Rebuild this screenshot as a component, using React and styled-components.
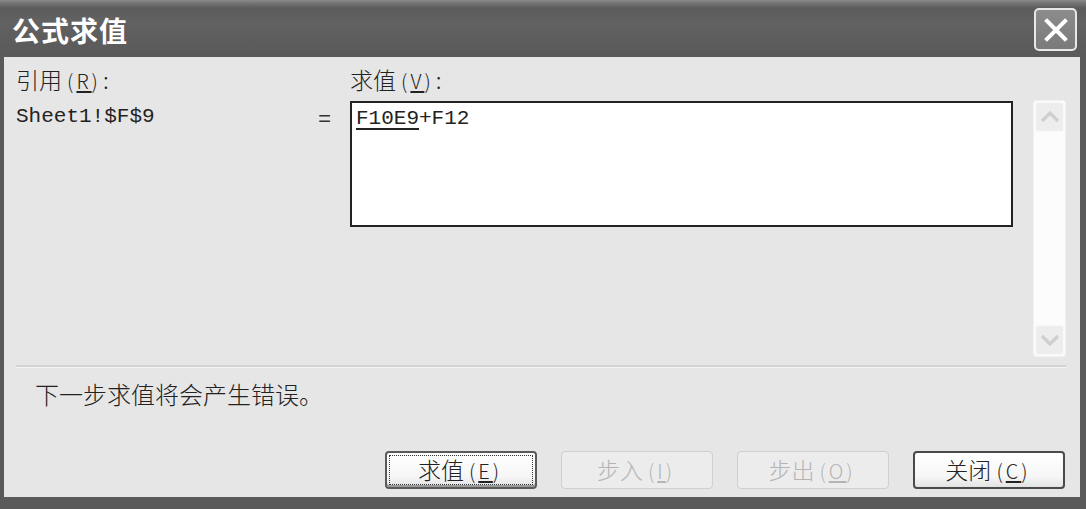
import React from 'react';
import styled, { createGlobalStyle } from 'styled-components';

const GlobalStyle = createGlobalStyle`
  html, body {
    margin: 0;
    padding: 0;
    background: #5a5a5a;
  }
  body {
    font-family: "Noto Sans CJK SC", "Noto Sans", sans-serif;
  }
`;

const cjk = '"Noto Sans CJK SC", "Noto Sans", sans-serif';
const mono = '"Liberation Mono", "DejaVu Sans Mono", monospace';

const Mnemonic = ({ letter, disabled }) => (
  <Key disabled={disabled}>
    (<u>{letter}</u>)
  </Key>
);

const ScrollArrow = ({ up }) => (
  <svg width="22" height="14" viewBox="0 0 22 14">
    <path
      d={up ? 'M3 11 L11 3 L19 11' : 'M3 3 L11 11 L19 3'}
      fill="none"
      stroke="#cfcfcf"
      strokeWidth="3.2"
    />
  </svg>
);

export default function App() {
  return (
    <Window>
      <GlobalStyle />
      <TitleBar>
        <Title>公式求值</Title>
        <CloseButton aria-label="close">
          <svg width="26" height="26" viewBox="0 0 26 26">
            <path d="M4 4 L22 22 M22 4 L4 22" stroke="#fff" strokeWidth="4" strokeLinecap="square" />
          </svg>
        </CloseButton>
      </TitleBar>

      <Body>
        <FieldGrid>
          <Label>
            引用 <Mnemonic letter="R" />:
          </Label>
          <Spacer />
          <Label>
            求值 <Mnemonic letter="V" />:
          </Label>
          <Spacer />
          <Spacer />

          <RefText>Sheet1!$F$9</RefText>
          <Equals>=</Equals>
          <ValueBox>
            <Current>F10E9</Current>+F12
          </ValueBox>
          <Spacer />
          <ScrollBar>
            <ScrollButton>
              <ScrollArrow up />
            </ScrollButton>
            <ScrollButton>
              <ScrollArrow />
            </ScrollButton>
          </ScrollBar>
        </FieldGrid>

        <Separator />
        <Message>下一步求值将会产生错误。</Message>

        <ButtonRow>
          <DialogButton primary>
            <Focus>
              <span>
                求值 <Mnemonic letter="E" />
              </span>
            </Focus>
          </DialogButton>
          <DialogButton disabled>
            <span>
              步入 <Mnemonic letter="I" disabled />
            </span>
          </DialogButton>
          <DialogButton disabled>
            <span>
              步出 <Mnemonic letter="O" disabled />
            </span>
          </DialogButton>
          <DialogButton>
            <span>
              关闭 <Mnemonic letter="C" />
            </span>
          </DialogButton>
        </ButtonRow>
      </Body>
    </Window>
  );
}

// Styled Components
const Window = styled.div`
  width: 1086px;
  height: 509px;
  display: flex;
  flex-direction: column;
  background: #5a5a5a;
  padding: 0 6px 12px 4px;
  box-sizing: border-box;
`;

const TitleBar = styled.div`
  height: 57px;
  margin: 0 -6px 0 -4px;
  padding: 0 9px 0 12px;
  display: flex;
  align-items: center;
  justify-content: space-between;
  box-sizing: border-box;
  background: linear-gradient(
    to bottom,
    #8a8a8a 0px,
    #767676 3px,
    #5c5c5c 8px,
    #626262 22px,
    #5e5e5e 34px,
    #5a5a5a 57px
  );
`;

const Title = styled.h1`
  margin: 0;
  padding-top: 2px;
  font-family: ${cjk};
  font-size: 28px;
  font-weight: 700;
  color: #ffffff;
  letter-spacing: 1px;
`;

const CloseButton = styled.button`
  width: 43px;
  height: 43px;
  margin-top: 2px;
  padding: 0;
  border: 2px solid #e8e8e8;
  border-radius: 5px;
  background: linear-gradient(to bottom, #8c8c8c, #7a7a7a);
  display: flex;
  align-items: center;
  justify-content: center;
`;

const Body = styled.div`
  flex: 1;
  background: #e6e6e6;
  padding: 8px 14px 8px 12px;
  display: flex;
  flex-direction: column;
  color: #222;
`;

const FieldGrid = styled.div`
  display: grid;
  grid-template-columns: 302px 32px 663px 1fr 33px;
  grid-template-rows: 36px auto;
`;

const Spacer = styled.div``;

const Label = styled.div`
  font-family: ${cjk};
  font-size: 23px;
  font-weight: 300;
  line-height: 28px;
  color: #222;
`;

const Key = styled.span`
  font-family: ${cjk};
  font-size: 20px;
  font-weight: 300;
  letter-spacing: 3px;
  margin-right: 2px;
  color: ${(p) => (p.disabled ? '#b4b4b4' : 'inherit')};
  u {
    text-underline-offset: 2px;
  }
`;

const RefText = styled.div`
  font-family: ${mono};
  font-size: 21px;
  line-height: 24px;
  padding-top: 4px;
  color: #222;
`;

const Equals = styled.div`
  font-family: ${mono};
  font-size: 22px;
  line-height: 24px;
  padding-top: 8px;
  color: #333;
`;

const ValueBox = styled.div`
  height: 126px;
  box-sizing: border-box;
  border: 2px solid #222;
  background: #ffffff;
  padding: 4px 4px;
  font-family: ${mono};
  font-size: 21px;
  line-height: 24px;
  color: #222;
`;

const Current = styled.span`
  text-decoration: underline;
  text-decoration-thickness: 2px;
  text-underline-offset: 4px;
`;

const ScrollBar = styled.div`
  height: 257px;
  margin-top: -1px;
  box-sizing: border-box;
  border: 1px solid #f2f2f2;
  border-radius: 3px;
  background: #fcfcfc;
  display: flex;
  flex-direction: column;
  justify-content: space-between;
`;

const ScrollButton = styled.div`
  height: 32px;
  box-sizing: border-box;
  border: 2px solid #fafafa;
  border-radius: 4px;
  background: #ededed;
  display: flex;
  align-items: center;
  justify-content: center;
`;

const Separator = styled.div`
  margin-top: 8px;
  height: 2px;
  background: #d2d2d2;
  border-bottom: 1px solid #f4f4f4;
`;

const Message = styled.div`
  margin-top: 11px;
  padding-left: 19px;
  font-family: ${cjk};
  font-size: 24px;
  font-weight: 300;
  line-height: 30px;
  color: #222;
`;

const ButtonRow = styled.div`
  margin-top: auto;
  display: flex;
  justify-content: flex-end;
  gap: 24px;
  padding-right: 1px;
`;

const DialogButton = styled.button`
  width: 152px;
  height: 38px;
  box-sizing: border-box;
  padding: 0;
  font-family: ${cjk};
  font-size: 23px;
  font-weight: 300;
  line-height: 30px;
  color: ${(p) => (p.disabled ? '#b4b4b4' : '#222')};
  border-radius: 4px;
  border: ${(p) =>
    p.primary ? '2px solid #5a5a5a' : p.disabled ? '1px solid #cfcfcf' : '2px solid #4a4a4a'};
  background: ${(p) =>
    p.disabled ? '#ececec' : 'linear-gradient(to bottom, #ffffff 0%, #f6f6f6 70%, #e2e2e2 100%)'};
  box-shadow: ${(p) => (p.primary ? 'inset 0 -2px 0 #9a9a9a' : 'none')};
  display: flex;
  align-items: center;
  justify-content: center;
`;

const Focus = styled.span`
  flex: 1;
  align-self: stretch;
  margin: 2px;
  border: 1px dotted #333;
  display: flex;
  align-items: center;
  justify-content: center;
`;
